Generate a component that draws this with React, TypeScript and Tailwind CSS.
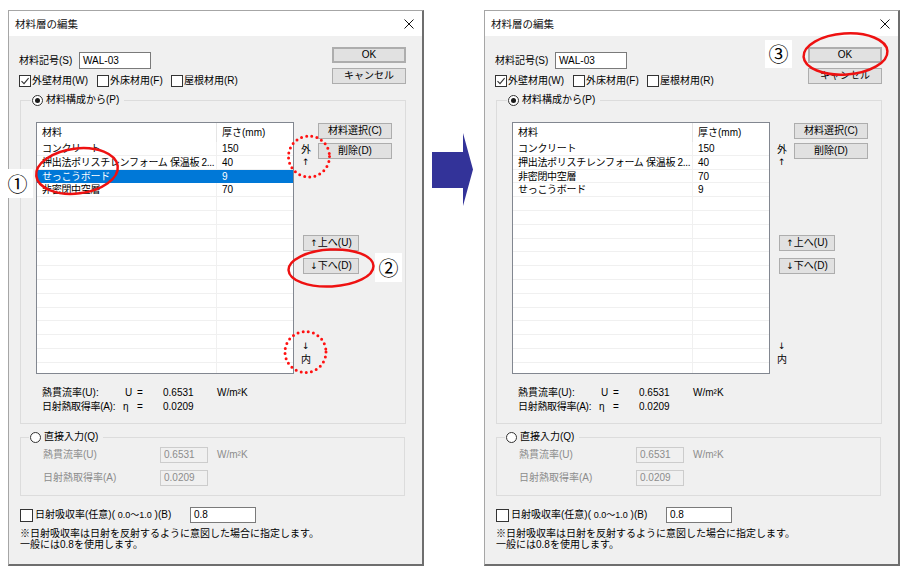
import React from "react";

type Row = [string, string];

const FONT = "font-['Liberation_Sans','Noto_Sans_CJK_JP',sans-serif]";
const CJK = "font-['Noto_Sans_CJK_JP',sans-serif]";
const ARW = "font-['DejaVu_Sans',sans-serif]";

function Btn({ children, className = "" }: { children: React.ReactNode; className?: string }) {
  return (
    <div
      className={`flex items-center justify-center bg-[#e1e1e1] border border-[#adadad] text-[10px] leading-[12px] text-black whitespace-nowrap ${className}`}
    >
      {children}
    </div>
  );
}

function Check({ checked = false, big = false }: { checked?: boolean; big?: boolean }) {
  return (
    <div
      className={`${big ? "w-[13px] h-[13px]" : "w-[12px] h-[12px]"} shrink-0 border border-[#333333] bg-white flex items-center justify-center`}
    >
      {checked && (
        <svg width="10" height="10" viewBox="0 0 10 10">
          <path d="M1.5 5.2 L4 7.7 L8.6 2.2" fill="none" stroke="#333333" strokeWidth="1.1" />
        </svg>
      )}
    </div>
  );
}

function Radio({ on = false }: { on?: boolean }) {
  return (
    <div className="w-[11px] h-[11px] shrink-0 rounded-full border border-[#333333] bg-white flex items-center justify-center">
      {on && <div className="w-[5px] h-[5px] rounded-full bg-[#1a1a1a]" />}
    </div>
  );
}

function ListView({ rows, selected }: { rows: Row[]; selected: number }) {
  const all: (Row | null)[] = [...rows];
  while (all.length < 18) all.push(null);
  return (
    <div className="w-[258px] h-[252px] shrink-0 border border-[#828790] bg-white overflow-hidden flex flex-col">
      <div className="flex h-[19px] shrink-0">
        <div className="w-[180px] pl-[5px] flex items-center border-r border-[#e5e5e5]">材料</div>
        <div className="flex-1 pl-[5px] flex items-center">厚さ(mm)</div>
      </div>
      {all.map((r, i) => {
        const sel = i === selected;
        return (
          <div
            key={i}
            className={`flex h-[13.8px] shrink-0 border-b leading-[13px] ${
              sel ? "bg-[#0078d7] text-white border-[#0078d7]" : "border-[#f0f0f0]"
            }`}
          >
            <div
              className={`w-[180px] pl-[5px] overflow-hidden whitespace-nowrap border-r tracking-[-0.3px] ${
                sel ? "border-[#0078d7]" : "border-[#f0f0f0]"
              }`}
            >
              {r ? r[0] : ""}
            </div>
            <div className="flex-1 pl-[5px] overflow-hidden whitespace-nowrap">{r ? r[1] : ""}</div>
          </div>
        );
      })}
    </div>
  );
}

function Dialog({ rows, selected }: { rows: Row[]; selected: number }) {
  return (
    <div className="w-[416px] h-[556px] shrink-0 flex flex-col border-l border-t border-r-2 border-b-2 border-l-[#a6a6a6] border-t-[#a6a6a6] border-r-[#6e6e6e] border-b-[#6e6e6e] text-[10px] leading-[12px] text-black">
      {/* title bar */}
      <div className="h-[25px] shrink-0 bg-white flex items-center justify-between pl-[6px] pr-[8px]">
        <span className="text-[10.5px] text-[#111111]">材料層の編集</span>
        <svg width="10" height="10" viewBox="0 0 10 10">
          <path d="M0.5 0.5 L9.5 9.5 M9.5 0.5 L0.5 9.5" stroke="#111111" strokeWidth="1" fill="none" />
        </svg>
      </div>

      {/* body */}
      <div className="flex-1 bg-[#f0f0f0] flex flex-col">
        {/* top section */}
        <div className="h-[58px] shrink-0 flex">
          <div className="w-[323px] pl-[10px] pt-[16px] flex flex-col">
            <div className="flex items-center h-[17px]">
              <span className="w-[60px] whitespace-nowrap">材料記号(S)</span>
              <div className="w-[72px] h-[17px] border border-[#7a7a7a] bg-white pl-[3px] flex items-center">WAL-03</div>
            </div>
            <div className="mt-[6px] flex items-center h-[12px]">
              <div className="w-[78px] flex items-center gap-[1px]">
                <Check checked />
                <span className="whitespace-nowrap">外壁材用(W)</span>
              </div>
              <div className="w-[74px] flex items-center gap-[1px]">
                <Check />
                <span className="whitespace-nowrap">外床材用(F)</span>
              </div>
              <div className="flex items-center gap-[1px]">
                <Check />
                <span className="whitespace-nowrap">屋根材用(R)</span>
              </div>
            </div>
          </div>
          <div className="pt-[11px] flex flex-col">
            <Btn className="w-[74px] h-[16px] border-2 border-[#0078d7]">OK</Btn>
            <Btn className="w-[74px] h-[16px] mt-[5px]">キャンセル</Btn>
          </div>
        </div>

        {/* group 1 */}
        <fieldset className="ml-[11px] w-[386px] h-[330px] shrink-0 border border-[#dcdcdc]">
          <legend className="ml-[10px] pl-[1px] pr-[5px] h-[12px]">
            <div className="flex items-center gap-[3px] h-[12px]">
              <Radio on />
              <span className="whitespace-nowrap">材料構成から(P)</span>
            </div>
          </legend>
          <div className="pl-[15px] pt-[16px]">
            <div className="flex">
              <ListView rows={rows} selected={selected} />
              <div className="w-[98px] flex flex-col">
                <Btn className="mt-[1px] ml-[24px] w-[74px] h-[16px]">材料選択(C)</Btn>
                <div className="mt-[4px] flex">
                  <div className="w-[24px] pl-[7px] flex flex-col leading-[12px]">
                    <span className={`${CJK}`}>外</span>
                    <span className={`${ARW} text-[9px] mt-[1px] pl-[1px]`}>↑</span>
                  </div>
                  <Btn className="w-[74px] h-[16px]">削除(D)</Btn>
                </div>
                <Btn className="mt-[67px] ml-[9px] w-[56px] h-[16px]">
                  <span className={`${ARW} text-[9px]`}>↑</span>上へ(U)
                </Btn>
                <Btn className="mt-[7px] ml-[9px] w-[56px] h-[16px]">
                  <span className={`${ARW} text-[9px]`}>↓</span>下へ(D)
                </Btn>
                <div className="mt-[66px] ml-[7px] flex flex-col leading-[12px]">
                  <span className={`${ARW} text-[9px] pl-[1px]`}>↓</span>
                  <span className={`${CJK} mt-[1px]`}>内</span>
                </div>
              </div>
            </div>
            <div className="mt-[12px] flex flex-col leading-[14px]">
              <div className="flex pl-[6px] h-[14px] items-center">
                <span className="w-[83px] whitespace-nowrap">熱貫流率(U):</span>
                <span className="w-[12px]">U</span>
                <span className="w-[26px]">=</span>
                <span className="w-[54px]">0.6531</span>
                <span>W/m²K</span>
              </div>
              <div className="flex pl-[6px] h-[14px] items-center">
                <span className="w-[81px] whitespace-nowrap tracking-[-0.3px]">日射熱取得率(A):</span>
                <span className="w-[14px]">η</span>
                <span className="w-[26px]">=</span>
                <span className="w-[54px]">0.0209</span>
              </div>
            </div>
          </div>
        </fieldset>

        {/* group 2 */}
        <fieldset className="mt-[7px] ml-[11px] w-[385px] h-[65px] shrink-0 border border-[#dcdcdc]">
          <legend className="ml-[8px] pl-[1px] pr-[5px] h-[12px]">
            <div className="flex items-center gap-[3px] h-[12px]">
              <Radio />
              <span className="whitespace-nowrap">直接入力(Q)</span>
            </div>
          </legend>
          <div className="pl-[22px] pt-[4px]">
            <div className="flex items-center h-[16px] text-[#8c8c8c]">
              <span className="w-[117px] whitespace-nowrap">熱貫流率(U)</span>
              <div className="w-[48px] h-[16px] border border-[#cccccc] bg-[#f0f0f0] pl-[3px] flex items-center">0.6531</div>
              <span className="ml-[9px]">W/m²K</span>
            </div>
            <div className="mt-[7px] flex items-center h-[16px] text-[#8c8c8c]">
              <span className="w-[117px] whitespace-nowrap">日射熱取得率(A)</span>
              <div className="w-[48px] h-[16px] border border-[#cccccc] bg-[#f0f0f0] pl-[3px] flex items-center">0.0209</div>
            </div>
          </div>
        </fieldset>

        {/* absorptance */}
        <div className="mt-[11px] ml-[11px] flex items-center h-[16px]">
          <Check big />
          <span className="ml-[2px] w-[155px] whitespace-nowrap">
            日射吸収率(任意)( <span className="text-[9px]">0.0〜1.0</span> )(B)
          </span>
          <div className="w-[66px] h-[16px] border border-[#7a7a7a] bg-white pl-[3px] flex items-center">0.8</div>
        </div>
        <div className="mt-[5px] ml-[11px] flex flex-col leading-[11px]">
          <span className="whitespace-nowrap">※日射吸収率は日射を反射するように意図した場合に指定します。</span>
          <span className="whitespace-nowrap">一般には0.8を使用します。</span>
        </div>
      </div>
    </div>
  );
}

const leftRows: Row[] = [
  ["コンクリート", "150"],
  ["押出法ポリスチレンフォーム 保温板 2...", "40"],
  ["せっこうボード", "9"],
  ["非密閉中空層", "70"],
];

const rightRows: Row[] = [
  ["コンクリート", "150"],
  ["押出法ポリスチレンフォーム 保温板 2...", "40"],
  ["非密閉中空層", "70"],
  ["せっこうボード", "9"],
];

export default function App() {
  return (
    <div className={`relative w-[918px] h-[581px] bg-white overflow-hidden text-black ${FONT}`}>
      <div className="flex pt-[10px] pl-[8px]">
        <Dialog rows={leftRows} selected={2} />
        <div className="w-[60px] shrink-0 pl-[8px] pt-[123px]">
          <svg width="42" height="74" viewBox="0 0 42 74">
            <polygon points="0,19 31,19 31,0 41,36.5 31,73 31,55 0,55" fill="#333399" />
          </svg>
        </div>
        <Dialog rows={rightRows} selected={-1} />
      </div>

      {/* annotation labels */}
      <div className={`absolute left-[2px] top-[169px] w-[31px] h-[29px] bg-white flex items-center justify-center text-[20px] leading-none ${CJK}`}>
        ①
      </div>
      <div className={`absolute left-[375px] top-[253px] w-[27px] h-[29px] bg-white flex items-center justify-center text-[20px] leading-none ${CJK}`}>
        ②
      </div>
      <div className={`absolute left-[765px] top-[40px] w-[27px] h-[28px] bg-white flex items-center justify-center text-[20px] leading-none ${CJK}`}>
        ③
      </div>

      {/* red annotation marks */}
      <svg className="absolute left-0 top-0 pointer-events-none" width="918" height="581" viewBox="0 0 918 581">
        <ellipse cx="77" cy="171" rx="41" ry="22.5" fill="none" stroke="#ee1111" strokeWidth="2.5" transform="rotate(-7 77 171)" />
        <ellipse cx="331" cy="268" rx="42.5" ry="18.5" fill="none" stroke="#ee1111" strokeWidth="2.5" transform="rotate(-3 331 268)" />
        <ellipse cx="845.5" cy="54" rx="42" ry="20.5" fill="none" stroke="#ee1111" strokeWidth="2.5" transform="rotate(-4 845.5 54)" />
        <circle cx="309" cy="156.5" r="20.5" fill="none" stroke="#ff1111" strokeWidth="3" strokeDasharray="0 5.2" strokeLinecap="round" />
        <circle cx="305.5" cy="352" r="20.5" fill="none" stroke="#ff1111" strokeWidth="3" strokeDasharray="0 5.2" strokeLinecap="round" />
      </svg>
    </div>
  );
}
